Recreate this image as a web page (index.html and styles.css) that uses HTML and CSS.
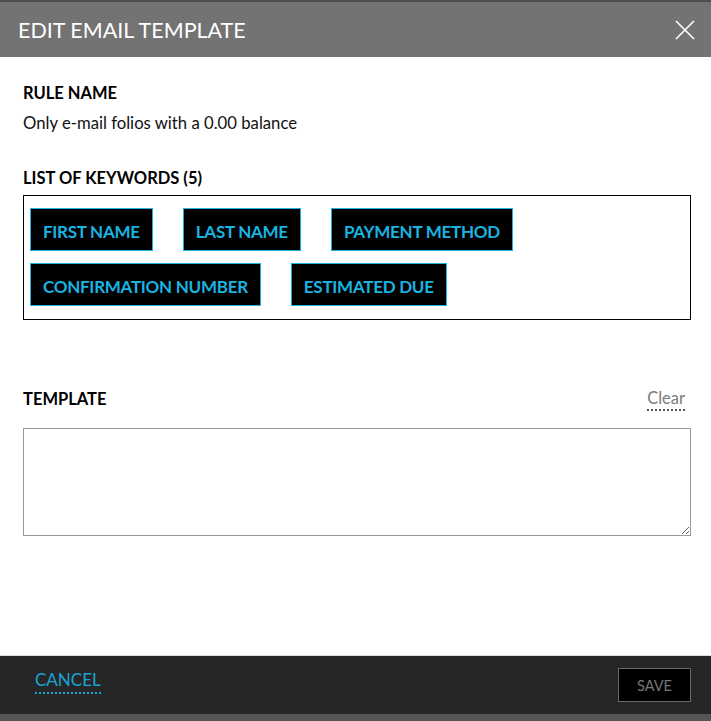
FILE: index.html
```html
<!DOCTYPE html>
<html>
<head>
<meta charset="utf-8">
<link rel="stylesheet" href="styles.css">
</head>
<body>
<div class="modal">
  <header class="modal-header">
    <h1 class="modal-title">EDIT EMAIL TEMPLATE</h1>
    <button class="close-btn" aria-label="Close">
      <svg width="20" height="20" viewBox="0 0 20 20"><path d="M1 1 L19 19 M19 1 L1 19" stroke="#fff" stroke-width="1.6" fill="none"/></svg>
    </button>
  </header>
  <main class="modal-body">
    <section class="field">
      <div class="label">RULE NAME</div>
      <div class="value">Only e-mail folios with a 0.00 balance</div>
    </section>
    <section class="field keywords-field">
      <div class="label">LIST OF KEYWORDS (5)</div>
      <div class="keywords">
        <span class="chip">FIRST NAME</span>
        <span class="chip">LAST NAME</span>
        <span class="chip">PAYMENT METHOD</span>
        <span class="chip">CONFIRMATION NUMBER</span>
        <span class="chip">ESTIMATED DUE</span>
      </div>
    </section>
    <section class="field template-field">
      <div class="template-head">
        <div class="label">TEMPLATE</div>
        <a class="clear-link">Clear</a>
      </div>
      <textarea class="template-input"></textarea>
    </section>
  </main>
  <footer class="modal-footer">
    <a class="cancel-link">CANCEL</a>
    <button class="save-btn">SAVE</button>
  </footer>
</div>
</body>
</html>
```
FILE: styles.css
```css
* { box-sizing: border-box; }
html, body { margin: 0; padding: 0; background: #fff; }
body { font-family: Lato, "Open Sans", Arial, sans-serif; width: 711px; height: 721px; overflow: hidden; }
.modal { display: flex; flex-direction: column; height: 721px; border-bottom: 7px solid #555; }
.modal-header {
  height: 57px; background: #737373; border-top: 2px solid #4d4d4d;
  display: flex; align-items: center; justify-content: space-between;
  padding: 0 16px 0 18px;
}
.modal-title { margin: 0; font-size: 21.5px; font-weight: 400; color: #fff; }
.close-btn { background: none; border: 0; padding: 0; width: 20px; height: 20px; display: flex; cursor: pointer; }
.modal-body { flex: 1; padding: 26px 20px 0 23px; color: #000; }
.label { font-size: 16.5px; font-weight: 700; line-height: 20px; }
.value { font-size: 16.7px; margin-top: 10px; line-height: 20px; color: #111; }
.keywords-field { margin-top: 35px; }
.keywords {
  margin-top: 7px; border: 1px solid #000; height: 125px;
  display: flex; flex-wrap: wrap; align-content: flex-start;
  gap: 12px 30px; padding: 12px 6px;
}
.chip {
  background: #000; border: 1px solid #1ab4e0; color: #1ab4e0;
  font-size: 17px; font-weight: 700; letter-spacing: -0.27px;
  height: 43px; line-height: 43px; padding: 1px 12px 0;
}
.template-field { margin-top: 66px; }
.template-head { display: flex; justify-content: space-between; align-items: center; padding-right: 6px; }
.clear-link { color: #7a7a7a; font-size: 16.5px; line-height: 20px; border-bottom: 2px dotted #555; padding-bottom: 1px; margin-top: 2px; }
.template-input {
  display: block; margin-top: 17px; width: 668px; height: 108px;
  border: 1px solid #999; resize: vertical; font-family: inherit;
}
.modal-footer {
  height: 59px; background: #262626; border-top: 1px solid #ddd;
  display: flex; align-items: center; justify-content: space-between;
  padding: 0 20px 0 35px;
}
.cancel-link {
  color: #1aa4d6; font-size: 17px; line-height: 17px;
  border-bottom: 2px dotted #1aa4d6; padding-bottom: 4px; margin-bottom: 5px;
}
.save-btn {
  width: 73px; height: 34px; background: #000; border: 1px solid #6a6a6a;
  color: #777; font-family: inherit; font-size: 14.5px; padding: 0;
}
```
